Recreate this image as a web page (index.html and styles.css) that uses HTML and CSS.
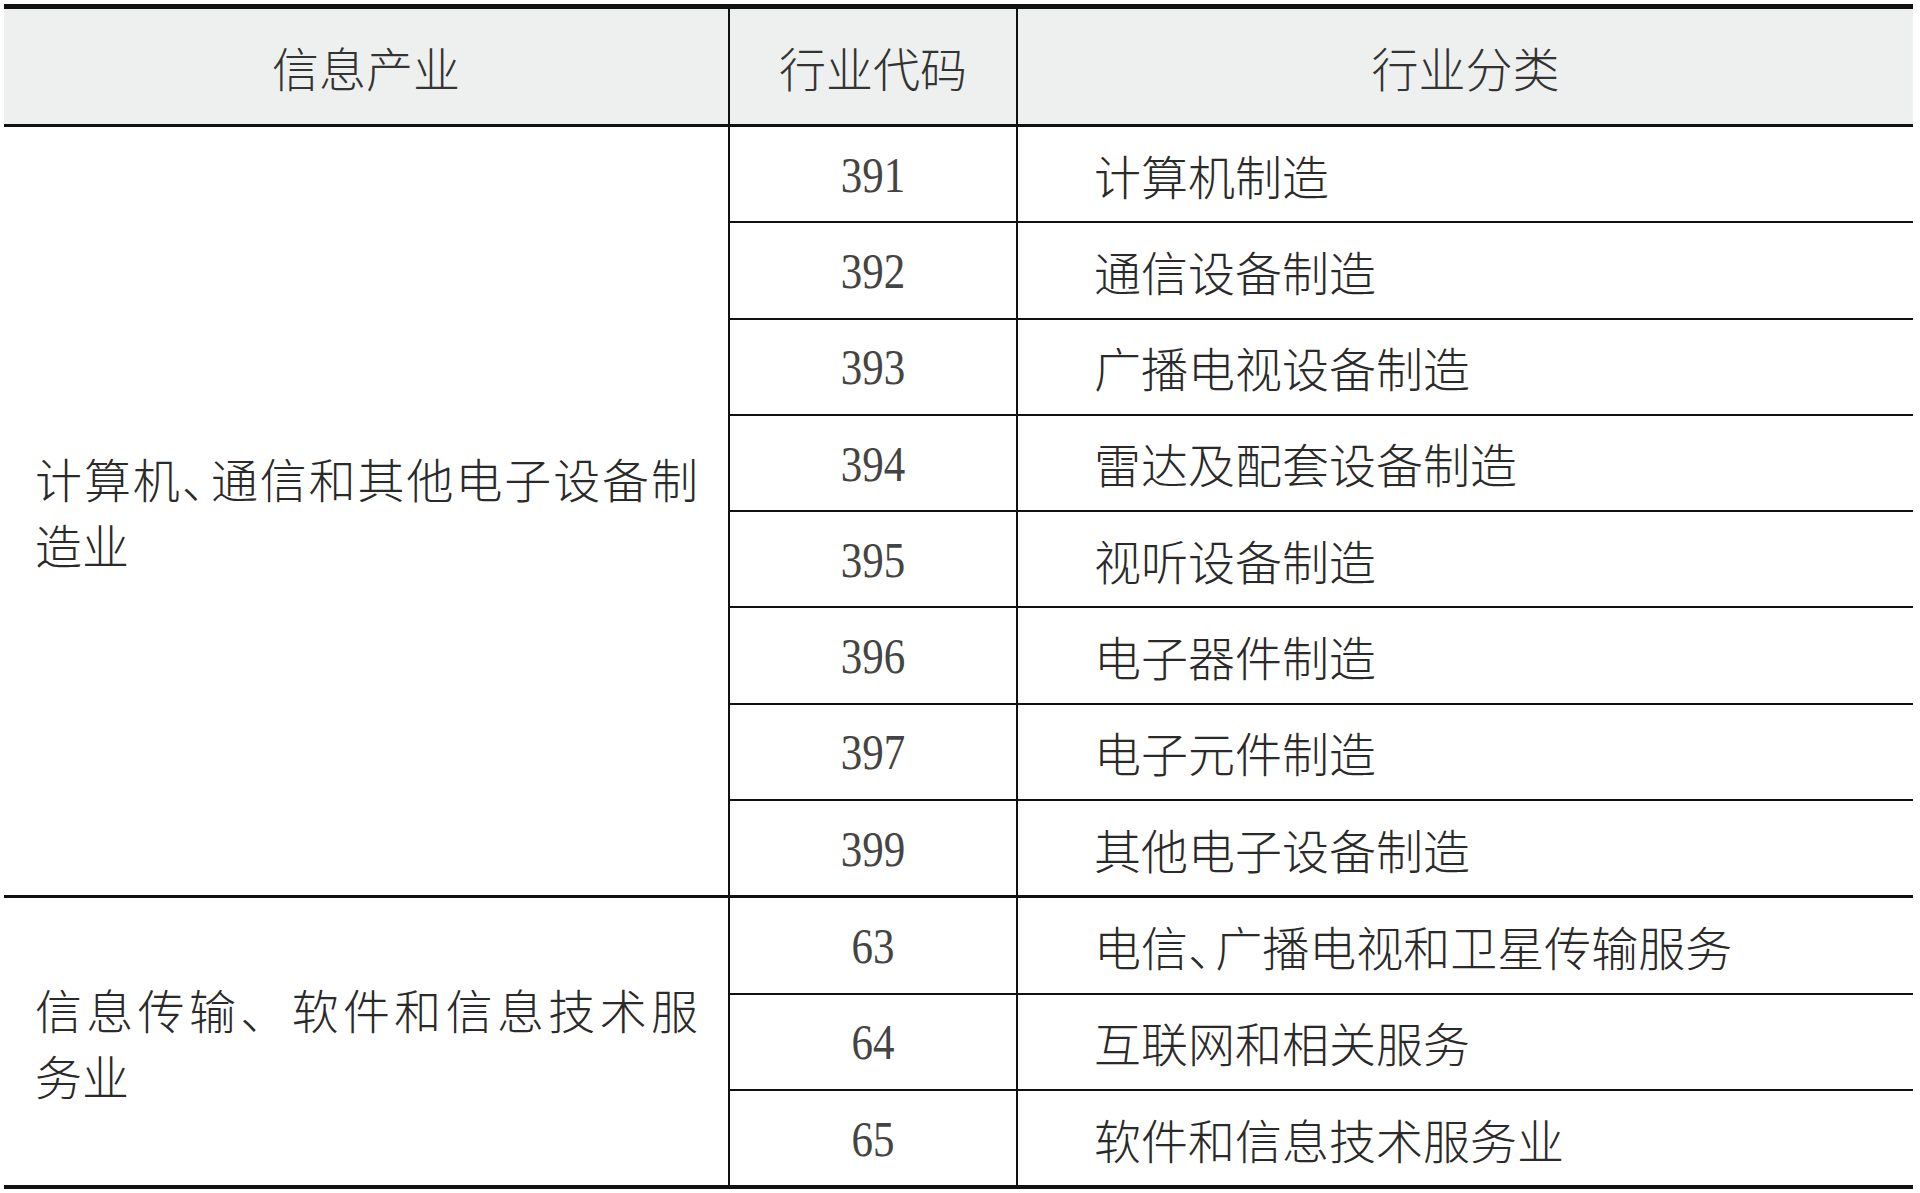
FILE: index.html
```html
<!DOCTYPE html>
<html lang="zh-CN">
<head>
<meta charset="utf-8">
<title>信息产业分类</title>
<link rel="stylesheet" href="styles.css">
</head>
<body>
<table class="industry">
  <colgroup>
    <col class="c-sector">
    <col class="c-code">
    <col class="c-name">
  </colgroup>
  <thead>
    <tr>
      <th>信息产业</th>
      <th>行业代码</th>
      <th>行业分类</th>
    </tr>
  </thead>
  <tbody class="group">
    <tr>
      <td class="sector" rowspan="8"><p><span class="line">计算机<span class="punct">、</span>通信和其他电子设备制</span>造业</p></td>
      <td class="code"><span class="num">391</span></td>
      <td class="name">计算机制造</td>
    </tr>
    <tr><td class="code"><span class="num">392</span></td><td class="name">通信设备制造</td></tr>
    <tr><td class="code"><span class="num">393</span></td><td class="name">广播电视设备制造</td></tr>
    <tr><td class="code"><span class="num">394</span></td><td class="name">雷达及配套设备制造</td></tr>
    <tr><td class="code"><span class="num">395</span></td><td class="name">视听设备制造</td></tr>
    <tr><td class="code"><span class="num">396</span></td><td class="name">电子器件制造</td></tr>
    <tr><td class="code"><span class="num">397</span></td><td class="name">电子元件制造</td></tr>
    <tr><td class="code"><span class="num">399</span></td><td class="name">其他电子设备制造</td></tr>
  </tbody>
  <tbody class="group">
    <tr>
      <td class="sector" rowspan="3"><p><span class="line">信息传输、软件和信息技术服</span>务业</p></td>
      <td class="code"><span class="num">63</span></td>
      <td class="name">电信<span class="punct">、</span>广播电视和卫星传输服务</td>
    </tr>
    <tr><td class="code"><span class="num">64</span></td><td class="name">互联网和相关服务</td></tr>
    <tr><td class="code"><span class="num">65</span></td><td class="name">软件和信息技术服务业</td></tr>
  </tbody>
</table>
</body>
</html>
```

FILE: styles.css
```css
html, body {
  margin: 0;
  padding: 0;
  background: #ffffff;
}

body {
  padding: 4px 7px 0 4px;
  font-family: "Noto Sans CJK SC", "Noto Sans", sans-serif;
  color: #2a2a2a;
}

.industry {
  width: 1909px;
  border-collapse: collapse;
  table-layout: fixed;
  border-top: 5px solid #111111;
  border-bottom: 4px solid #111111;
}

.c-sector { width: 725px; }
.c-code { width: 288px; }
.c-name { width: auto; }

.industry th {
  height: 115px;
  padding: 0;
  background: #eeefef;
  font-weight: 300;
  font-size: 47px;
  color: #333333;
  text-align: center;
  vertical-align: middle;
  border-bottom: 3px solid #111111;
  border-right: 2px solid #111111;
}

.industry th:last-child { border-right: none; }

.industry td {
  height: 94.3px;
  padding: 0;
  font-weight: 300;
  font-size: 47px;
  line-height: 1.3;
  vertical-align: middle;
  border-bottom: 2px solid #111111;
  border-right: 2px solid #111111;
}

.industry td.name {
  border-right: none;
  padding: 0 0 0 76px;
  white-space: nowrap;
}

.industry td.code {
  height: 86.3px;
  text-align: center;
  padding: 0 0 8px 0;
}

.num {
  display: inline-block;
  font-family: "Liberation Serif", "Times New Roman", serif;
  font-size: 43px;
  font-weight: 400;
  color: #444444;
  transform: scaleY(1.18);
}

.punct {
  letter-spacing: -0.42em;
}

.industry td.sector {
  height: auto;
  padding: 0 30px 0 31px;
}

.sector p {
  margin: 0;
  line-height: 66px;
  white-space: nowrap;
}

.sector .line {
  display: block;
  text-align: justify;
  text-align-last: justify;
}

.group + .group tr:first-child td {
  border-top: 3px solid #111111;
}

.group:last-child tr:last-child td {
  border-bottom: none;
}
```
